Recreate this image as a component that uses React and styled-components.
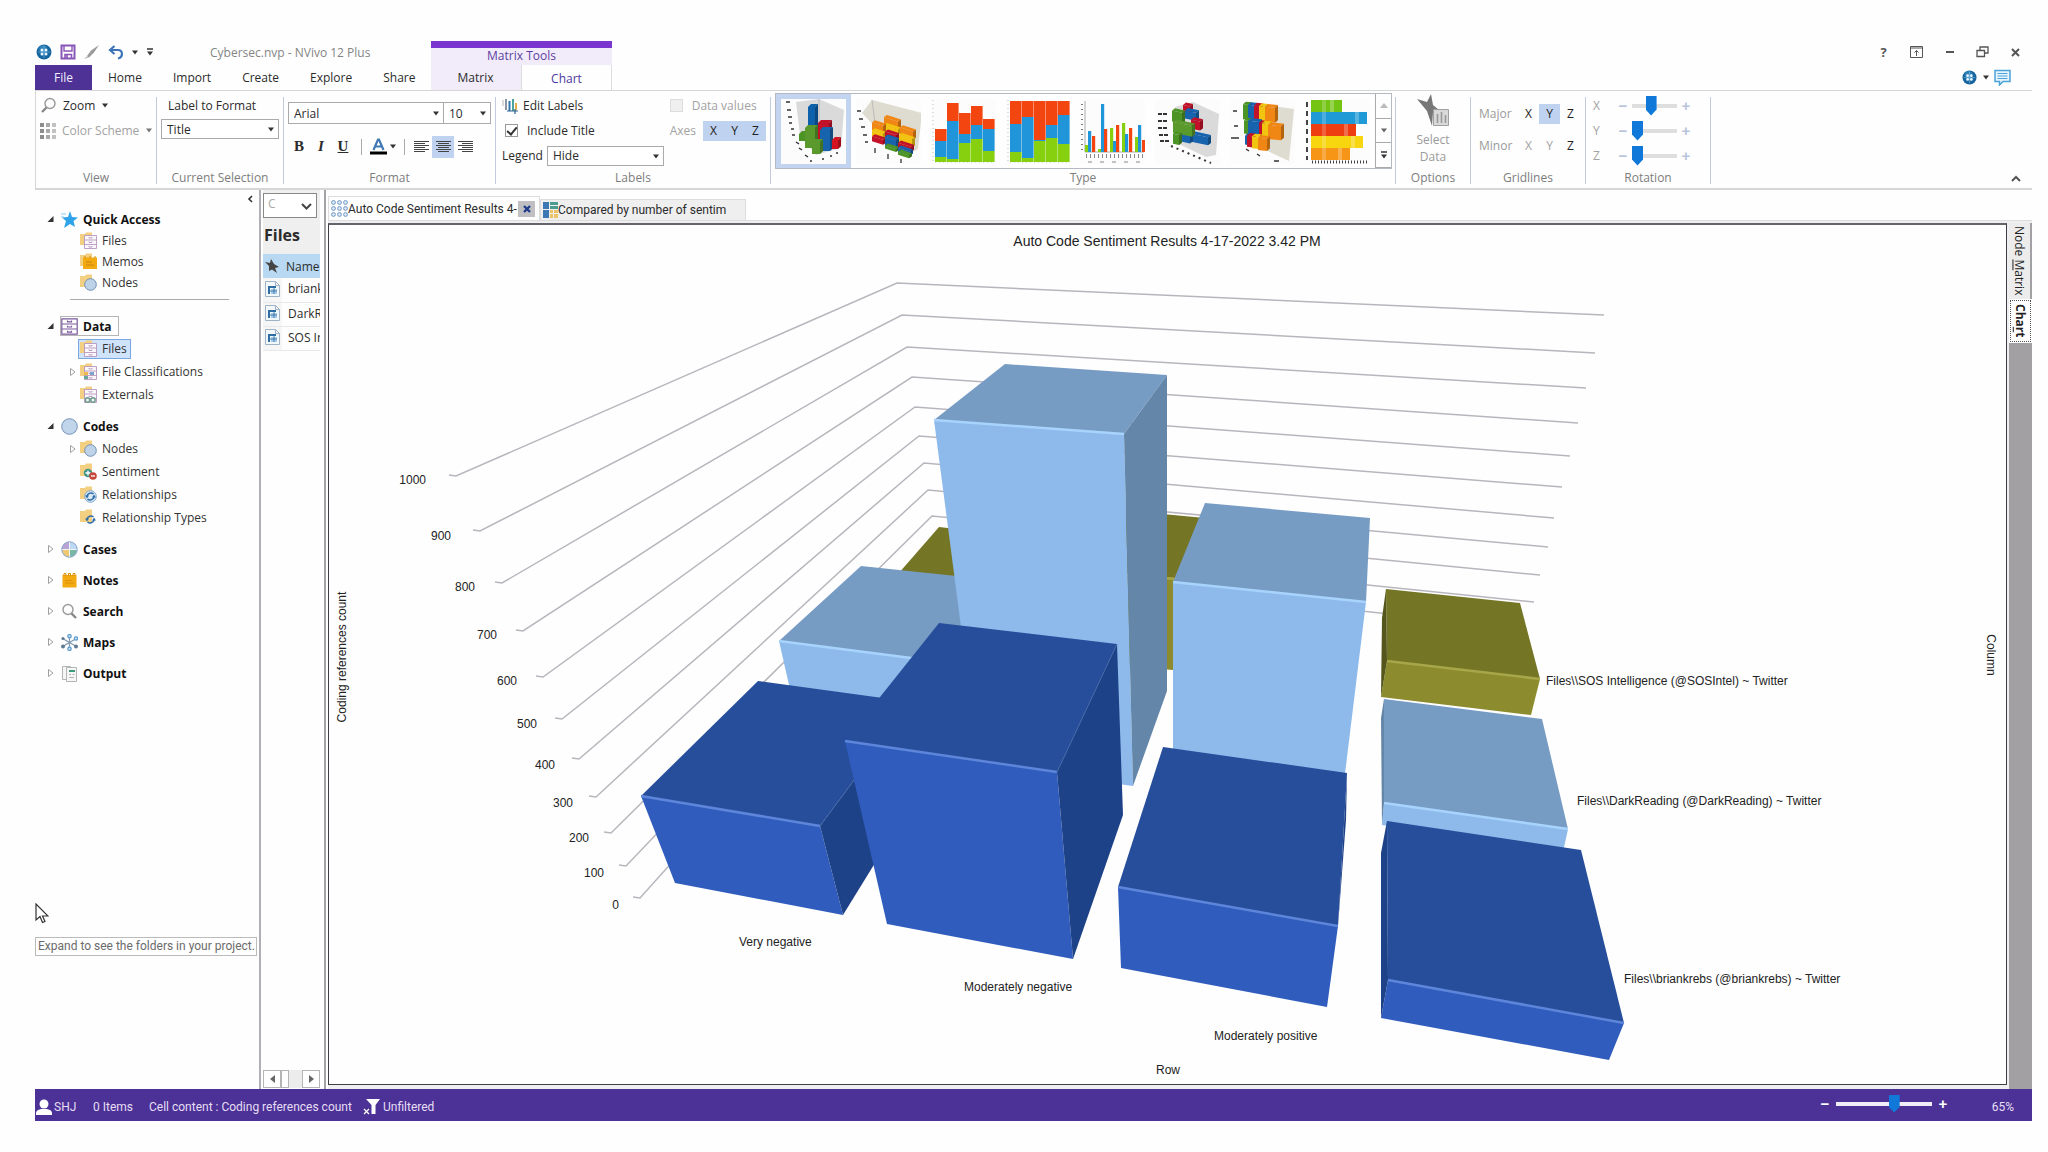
import React, { useState } from 'react'
import styled, { createGlobalStyle } from 'styled-components'

const ui = `'Open Sans', 'Noto Sans', sans-serif`
const narrow = `Roboto, 'Liberation Sans', sans-serif`
const arial = `'Liberation Sans', Arial, sans-serif`

const GlobalStyle = createGlobalStyle`
    * {
        box-sizing: border-box;
    }

    body {
        margin: 0;
        background: #fefefe;
        color: #2b2b2b;
        font-family: ${ui};
        font-size: 12px;
    }

    button, select, input {
        font: inherit;
        color: inherit;
        margin: 0;
    }

    svg {
        display: block;
        flex: none;
    }
`

/* ---------- icons ---------- */

const Caret = ({ color = '#333' }) => (
    <svg width="8" height="5" viewBox="0 0 8 5"><path d="M1 0.5h6L4 4.5z" fill={color} /></svg>
)

const GlobeIcon = ({ size = 16 }) => (
    <svg width={size} height={size} viewBox="0 0 16 16">
        <circle cx="8" cy="8" r="7.5" fill="#17659f" />
        <circle cx="7" cy="5" r="4" fill="#3d94c8" opacity=".6" />
        <g fill="#e9f6ff">
            <circle cx="6" cy="6" r="1.5" />
            <circle cx="10" cy="6" r="1.5" />
            <circle cx="6" cy="10" r="1.5" />
            <circle cx="10" cy="10" r="1.5" />
        </g>
        <path d="M2 8h12M8 2v12" stroke="#7fc0e6" strokeWidth=".6" />
    </svg>
)

const SaveIcon = () => (
    <svg width="16" height="16" viewBox="0 0 16 16" fill="none" stroke="#8a55b8" strokeWidth="2">
        <path d="M1.5 1.5h13v13h-13z" />
        <path d="M4 2v5h8V2" strokeWidth="1.4" />
        <path d="M5 14.5v-4h6.5v4" strokeWidth="1.6" />
        <path d="M7 11v3" strokeWidth="1.6" />
    </svg>
)

const PencilIcon = () => (
    <svg width="17" height="15" viewBox="0 0 17 15">
        <path d="M16 0L8 5.5 4 11l2 1.5 5-5z" fill="#9b9b9b" />
        <path d="M1 14l3-3 2 1.5z" fill="#bbb" />
    </svg>
)

const UndoIcon = () => (
    <svg width="16" height="15" viewBox="0 0 16 15" fill="none" stroke="#3d74b8" strokeWidth="2.2">
        <path d="M6.5 1L2 5l4.5 4" />
        <path d="M2.5 5H10c5 0 5.5 7 0 8.5" />
    </svg>
)

const MoreIcon = () => (
    <svg width="8" height="8" viewBox="0 0 8 8"><path d="M1 1h6" stroke="#333" strokeWidth="1.5" /><path d="M1 3.5h6L4 7.5z" fill="#333" /></svg>
)

const MagnifierIcon = ({ flip }) => (
    <svg width="17" height="17" viewBox="0 0 17 17" fill="none">
        <g transform={flip ? 'translate(17 0) scale(-1 1)' : undefined}>
            <circle cx="7" cy="6.5" r="5" stroke="#999" strokeWidth="1.4" />
            <path d="M10.5 10.5L15 15" stroke="#888" strokeWidth="2.4" />
        </g>
    </svg>
)

const SchemeIcon = () => (
    <svg width="16" height="16" viewBox="0 0 16 16">
        {[0, 1, 2].map(r => [0, 1, 2].map(c => (
            <rect key={`${r}${c}`} x={c * 6} y={r * 6} width="4" height="4" fill={['#8c8c8c', '#a8a8a8', '#c2c2c2'][c]} />
        )))}
    </svg>
)

const AlignIcon = ({ align }) => {
    const x = { left: 0, center: 2, right: 4 }[align]
    return (
        <svg width="15" height="13" viewBox="0 0 15 13" stroke="#444" strokeWidth="1">
            {[1, 3, 5, 7, 9, 11].map((y, i) => (
                <path key={y} d={i % 2 ? `M${x} ${y + 0.5}h11` : `M0 ${y + 0.5}h15`} />
            ))}
        </svg>
    )
}

const FontColorIcon = () => (
    <svg width="17" height="17" viewBox="0 0 17 17">
        <path d="M3.5 12L8 1.5h1L13.5 12M5.3 8.5h6.4" fill="none" stroke="#3f78b5" strokeWidth="2.2" />
        <path d="M0 13.5h17v3H0z" fill="#000" />
    </svg>
)

const EditLabelsIcon = () => (
    <svg width="17" height="16" viewBox="0 0 17 16" fill="none" strokeWidth="2">
        <path d="M1 2v6" stroke="#b5b5b5" strokeWidth="1" />
        <path d="M4 1v11" stroke="#8b97a5" />
        <path d="M7.5 3v10" stroke="#2d78b5" />
        <path d="M11 1v12" stroke="#4aa3a0" />
        <path d="M14 5v7" stroke="#e5b04a" />
        <path d="M5 13h11M13 11v5" stroke="#2d5f8a" strokeWidth="1.2" />
    </svg>
)

const SelectDataIcon = () => (
    <svg width="33" height="33" viewBox="0 0 33 33">
        <path d="M0 5l10 3L14 0l2 11 6 5-6 2-1 14-5-15z" fill="#777" />
        <path d="M16.5 15.5h15v16h-15z" fill="#d9d9d9" stroke="#a0a0a0" />
        <path d="M20.5 20v9M24.5 18v11M28.5 21v8" stroke="#999" strokeWidth="1.6" />
    </svg>
)

const RibbonToggleIcon = () => (
    <svg width="13" height="12" viewBox="0 0 13 12" fill="none" stroke="#555">
        <path d="M.5 .5h12v11H.5zM.5 2h12" />
        <path d="M6.5 10V4.5M4.5 6.5l2-2 2 2" />
    </svg>
)

const RestoreIcon = () => (
    <svg width="13" height="12" viewBox="0 0 13 12" fill="none" stroke="#555" strokeWidth="1.3">
        <path d="M4 4V1h8v6H9" />
        <path d="M1 4.5h7.5v6H1z" />
    </svg>
)

const ChatIcon = () => (
    <svg width="17" height="17" viewBox="0 0 17 17">
        <path d="M1 1.5h15v11H9L5.5 16v-3.5H1z" fill="#e8f4fc" stroke="#4ba3d8" strokeWidth="1.5" />
        <path d="M3.5 4.5h10M3.5 7h10M3.5 9.5h10" stroke="#4ba3d8" />
    </svg>
)

const StarIcon = () => (
    <svg width="17" height="17" viewBox="0 0 17 17">
        <path d="M9 0l2 6 6 .5-4.5 3.5L14 16l-5-3-6 4 2-7-4-3.5 6-.5z" fill="#2ea3ea" />
        <path d="M0 3h5M0 6h3" stroke="#8ccdf2" />
    </svg>
)

const CabinetIcon = () => (
    <svg width="17" height="17" viewBox="0 0 17 17" fill="none" stroke="#7a5a9c" strokeWidth="1.2">
        <path d="M.8 .8h15.4v15.4H.8zM.8 6h15.4M.8 11h15.4" />
        <path d="M6.5 2.5v1.3h4V2.5M6.5 7.7V9h4V7.7M6.5 12.8v1.3h4v-1.3" />
    </svg>
)

const CircleIcon = () => (
    <svg width="17" height="17" viewBox="0 0 17 17"><circle cx="8.5" cy="8.5" r="7.8" fill="#c1d5ea" stroke="#7190b5" /></svg>
)

const CasesIcon = () => (
    <svg width="17" height="17" viewBox="0 0 17 17">
        <path d="M8.5 8.5V1A7.5 7.5 0 0 0 1 8.5z" fill="#b9a3d6" />
        <path d="M8.5 8.5V1A7.5 7.5 0 0 1 16 8.5z" fill="#bcd8f2" />
        <path d="M8.5 8.5V16A7.5 7.5 0 0 1 1 8.5z" fill="#eec970" />
        <path d="M8.5 8.5V16A7.5 7.5 0 0 0 16 8.5z" fill="#78b8a4" />
        <path d="M8.5 1v15M1 8.5h15" stroke="#f4f7fa" />
        <circle cx="8.5" cy="8.5" r="7.7" fill="none" stroke="#7e9cc4" />
    </svg>
)

const NotesIcon = () => (
    <svg width="17" height="17" viewBox="0 0 17 17">
        <path d="M1.5 3h14v12.5h-14z" fill="#f3a910" />
        <path d="M3 4V1.5h2V4M7.5 4V1.5h2V4M12 4V1.5h2V4" fill="none" stroke="#d98f08" />
        <path d="M4 8.5h7M4 11h9" stroke="#d08c10" strokeWidth=".8" />
    </svg>
)

const MapsIcon = () => (
    <svg width="17" height="17" viewBox="0 0 17 17" stroke="#7e97ad" strokeWidth="1.2">
        <path d="M8.5 3v11M2.5 5l12 7M14.5 5l-12 7" />
        <circle cx="8.5" cy="2.2" r="1.7" fill="#c4e0f5" stroke="#5b9bd0" />
        <circle cx="8.5" cy="14.8" r="1.7" fill="#c4e0f5" stroke="#5b9bd0" />
        <circle cx="15" cy="4.5" r="1.7" fill="#c4e0f5" stroke="#5b9bd0" />
        <circle cx="2" cy="4.5" r="1.6" fill="#5f7a92" stroke="none" />
        <circle cx="2" cy="12.5" r="2" fill="#5f7a92" stroke="none" />
        <circle cx="15" cy="12.5" r="2" fill="#5f7a92" stroke="none" />
        <circle cx="8.5" cy="8.5" r="1.5" fill="#8ba2b6" stroke="none" />
    </svg>
)

const OutputIcon = () => (
    <svg width="17" height="17" viewBox="0 0 17 17" fill="#f6f6f6" stroke="#b4b4b4">
        <path d="M1.5 1.5h8v13h-8z" />
        <path d="M5.5 2.5h10v14h-10z" />
        <path d="M8 6h6" stroke="#3d9b7a" strokeWidth="2" />
        <path d="M8 9.5h2M11.5 9.5h2M8 12.5h5" />
    </svg>
)

const FolderIcon = ({ kind }) => (
    <svg width="17" height="17" viewBox="0 0 17 17">
        <path d="M0 2h5l1-1.5h6V13H0z" fill="#f3cf82" />
        {(kind === 'files' || kind === 'class' || kind === 'ext') && (
            <g fill="#fbf8fc" stroke="#b796bd" strokeWidth=".9">
                <path d="M4.5 3.5h12v13h-12zM4.5 8h12M4.5 12.5h12" />
                <path d="M9 5v1h3V5M9 9.5v1h3v-1M9 14v1h3v-1" />
            </g>
        )}
        {kind === 'class' && <g><path d="M4 9h4v3H4z" fill="#edb74a" /><path d="M4 13h4v3H4z" fill="#69a796" /><path d="M10 9h4v3h-4z" fill="#7ca3c9" /></g>}
        {kind === 'ext' && <g fill="#eef5f2" stroke="#6c9a8c" strokeWidth="1.4"><circle cx="7.5" cy="14" r="2.2" /><circle cx="13" cy="14" r="2.2" /></g>}
        {kind === 'memos' && <g><path d="M3 4.5h14V16H3z" fill="#f3a910" /><path d="M5 5V3M10 5V3M15 5V3" stroke="#cf8a0b" /><path d="M6 9h6M6 12h8" stroke="#bd7c10" strokeWidth=".8" /></g>}
        {kind === 'nodes' && <circle cx="10.5" cy="10.5" r="5.8" fill="#bed3e8" stroke="#7190b5" />}
        {kind === 'sentiment' && (
            <g>
                <circle cx="8" cy="10" r="4.2" fill="#3f9488" />
                <path d="M8 7.5v5M5.5 10h5" stroke="#fff" strokeWidth="1.3" />
                <circle cx="13" cy="13" r="3.8" fill="#c8473d" />
                <path d="M11 13h4" stroke="#fff" strokeWidth="1.3" />
            </g>
        )}
        {(kind === 'rel' || kind === 'reltype') && (
            <g fill="none">
                {kind === 'rel' && <circle cx="10.5" cy="10.5" r="5.8" fill="#dbe9f7" stroke="#7ea5d2" />}
                <path d="M7 10a4 4 0 0 1 6.5-2M14 11a4 4 0 0 1-6.5 2" stroke="#2f6ea8" strokeWidth="1.6" />
                <path d="M5 9.5h4l-2 3zM16 11.5h-4l2-3z" fill="#2f6ea8" />
            </g>
        )}
    </svg>
)

const Expander = ({ open }) => (
    <svg width="8" height="10" viewBox="0 0 8 10">
        {open
            ? <path d="M6.5 2v6H.5z" fill="#333" />
            : <path d="M1.5 1.5L6 5 1.5 8.5z" fill="#fff" stroke="#a0a0a0" />}
    </svg>
)

const SheetIcon = () => (
    <svg width="15" height="16" viewBox="0 0 15 16">
        <path d="M.5 .5h10l4 4v11H.5z" fill="#f2f7fb" stroke="#9fb3c4" />
        <path d="M10.5 .5v4h4" fill="none" stroke="#9fb3c4" />
        <path d="M6 8h6v5H6z" fill="#a9cbe6" />
        <path d="M3 5h8v2H3zM3 5h2v8H3z" fill="#2d6da3" />
        <path d="M3 10h9M9 7v6" stroke="#2d6da3" strokeWidth=".8" />
    </svg>
)

const PinIcon = () => (
    <svg width="14" height="14" viewBox="0 0 14 14"><path d="M0 3l5 1 1-4 3 5 5 3-4 1 2 5-5-3.5L4 12V7z" fill="#444" /></svg>
)

const DotsIcon = () => (
    <svg width="17" height="17" viewBox="0 0 17 17" fill="#dceaf7" stroke="#6f97c4">
        {[2.5, 8.5, 14.5].map(y => [2.5, 8.5, 14.5].map(x => <circle key={`${x}-${y}`} cx={x} cy={y} r="1.9" />))}
    </svg>
)

const TreemapIcon = () => (
    <svg width="15" height="16" viewBox="0 0 15 16">
        <path d="M0 0h6v7H0zM0 8h6v8H0z" fill="#3d78b5" />
        <path d="M7 0h8v3H7zM7 4h8v3H7z" fill="#4b9d90" />
        <path d="M7 8h3v3H7zM11 8h4v3h-4zM7 12h3v4H7zM11 12h4v4h-4z" fill="#ecc467" />
    </svg>
)

const UserIcon = () => (
    <svg width="16" height="16" viewBox="0 0 16 16" fill="#fff"><circle cx="8" cy="5" r="4.5" /><path d="M0 16v-2q0-3 5-4h6q5 1 5 4v2z" /></svg>
)

const FilterIcon = () => (
    <svg width="18" height="16" viewBox="0 0 18 16">
        <path d="M3 0h14l-4.5 6v9h-4V6z" fill="#fff" />
        <path d="M1 10l5 5M6 10l-5 5" stroke="#fff" strokeWidth="1.2" />
    </svg>
)

const MouseCursor = styled(({ className }) => (
    <svg className={className} width="14" height="21" viewBox="0 0 14 21">
        <path d="M1 1v16l4-3.5 2.5 6 2.5-1L7.5 13H13z" fill="#fff" stroke="#333" strokeWidth="1.2" />
    </svg>
))`
    position: absolute;
    left: 0;
    bottom: 165px;
`

/* ---------- chart type gallery ---------- */

const RED = '#f2450f'
const BLUE = '#2095da'
const GREEN = '#86d00f'

const StackedThumb = ({ bars }) => (
    <>
        <path d="M2 1v62h62" fill="none" stroke="#999" strokeWidth=".6" strokeDasharray="1 3" />
        {bars.map(([r, b, g], i) => (
            <g key={i}>
                <rect x={4 + i * 12} y={r} width="11.6" height={b - r} fill={RED} />
                <rect x={4 + i * 12} y={b} width="11.6" height={g - b} fill={BLUE} />
                <rect x={4 + i * 12} y={g} width="11.6" height={63 - g} fill={GREEN} />
            </g>
        ))}
    </>
)

const clustered = [
    [5, 46, GREEN], [8, 32, BLUE], [12, 37, RED],
    [18, 50, GREEN], [21, 5, BLUE], [24, 30, RED],
    [30, 29, GREEN], [33, 42, BLUE], [36, 26, RED],
    [42, 24, GREEN], [45, 35, BLUE], [49, 29, RED],
    [55, 38, GREEN], [58, 26, BLUE], [62, 41, RED],
]

const Box3d = ({ x, y, w, h, c }) => (
    <g>
        <path d={`M${x} ${y}l3-3h${w}l-3 3z`} fill={c} />
        <path d={`M${x + w} ${y}l3-3v${h}l-3 3z`} fill={c} />
        <path d={`M${x + w} ${y}l3-3v${h}l-3 3z`} fill="#000" opacity=".25" />
        <rect x={x} y={y} width={w} height={h} fill={c} />
    </g>
)

const thumbs = [
    {
        name: '3D column',
        art: (
            <>
                <path d="M15 3l23-3 25 11-3 38-25 7L19 36z" fill="#dadada" />
                <path d="M38 0v38" stroke="#bbb" />
                <Box3d x={37} y={24} w={11} h={22} c="#c2122a" />
                <Box3d x={27} y={8} w={7} h={30} c="#0d61ab" />
                <Box3d x={18} y={35} w={7} h={7} c="#4d9427" />
                <Box3d x={39} y={31} w={10} h={21} c="#1763ad" />
                <Box3d x={51} y={41} w={6} h={9} c="#d31320" />
                <Box3d x={24} y={29} w={10} h={20} c="#5a9a2c" />
                <Box3d x={31} y={43} w={8} h={12} c="#5a9a2c" />
                <path d="M5 3h4M6 11h4M7 18h4M8 24h3M10 30h3M11 36h3M15 43l3 2M18 49l3 2M24 56l3 2M29 62h2M41 60h2M49 57h2M55 54h2" stroke="#333" strokeWidth="1.5" />
            </>
        ),
    },
    {
        name: '3D stacked column',
        art: (
            <>
                <path d="M6 14L16 1l50 13-4 36-14 8z" fill="#dedbd0" />
                <path d="M16 1l4 30" stroke="#bbb" />
                <g transform="skewY(18)">
                    <Box3d x={28} y={9} w={14} h={8} c="#f08614" />
                    <Box3d x={28} y={17} w={14} h={5} c="#f2c40f" />
                    <Box3d x={16} y={18} w={11} h={8} c="#f08614" />
                    <Box3d x={16} y={26} w={11} h={6} c="#f2c40f" />
                    <Box3d x={16} y={32} w={11} h={5} c="#c2122a" />
                    <Box3d x={29} y={23} w={11} h={5} c="#c2122a" />
                    <Box3d x={29} y={28} w={11} h={9} c="#1763ad" />
                    <Box3d x={29} y={37} w={11} h={3} c="#4d9427" />
                    <Box3d x={44} y={14} w={13} h={8} c="#f08614" />
                    <Box3d x={43} y={22} w={13} h={8} c="#f2c40f" />
                    <Box3d x={42} y={30} w={13} h={5} c="#c2122a" />
                    <Box3d x={42} y={35} w={12} h={4} c="#1763ad" />
                    <Box3d x={42} y={39} w={11} h={3} c="#4d9427" />
                </g>
                <path d="M1 12h4M3 20h4M5 28h4M7 36h4M9 43h3M19 49v5M32 55v5M45 60v4" stroke="#333" strokeWidth="1.3" />
            </>
        ),
    },
    { name: 'Stacked column', art: <StackedThumb bars={[[30, 42, 58], [4, 22, 60], [14, 35, 44], [7, 26, 40], [20, 30, 52]]} /> },
    { name: '100% stacked column', art: <StackedThumb bars={[[2, 25, 53], [2, 18, 59], [2, 41, 42], [2, 26, 39], [2, 16, 45]]} /> },
    {
        name: 'Clustered column',
        art: (
            <>
                <path d="M5 2v51h59" fill="none" stroke="#888" strokeWidth=".7" />
                <path d="M2 5v49" stroke="#777" strokeWidth="2" strokeDasharray="1 4" />
                {clustered.map(([x, y, c]) => <rect key={x} x={x} y={y} width="3.2" height={53 - y} fill={c} />)}
                <path d="M6 57h58" stroke="#888" strokeWidth="4" strokeDasharray="1 3" />
                <path d="M8 63h56" stroke="#888" strokeDasharray="4 8" />
            </>
        ),
    },
    {
        name: '3D bar',
        art: (
            <>
                <path d="M20 8L38 3l26 12-3 41-10 2-29-14z" fill="#dadada" />
                <g transform="skewY(12)">
                    <Box3d x={28} y={0} w={7} h={8} c="#c2122a" />
                    <Box3d x={30} y={5} w={11} h={8} c="#1763ad" />
                    <Box3d x={36} y={13} w={9} h={9} c="#c2122a" />
                    <Box3d x={17} y={8} w={10} h={11} c="#4d9427" />
                    <Box3d x={35} y={27} w={18} h={8} c="#1763ad" />
                    <Box3d x={25} y={27} w={10} h={10} c="#1763ad" />
                    <Box3d x={18} y={19} w={19} h={11} c="#5a9a2c" />
                    <Box3d x={18} y={31} w={6} h={10} c="#4d9427" />
                </g>
                <path d="M3 15h9M3 22h10M3 29h10M4 36h9M5 42h10" stroke="#333" strokeWidth="2" strokeDasharray="4 1" />
                <path d="M16 47l40 17" stroke="#333" strokeWidth="2" strokeDasharray="2 4" />
            </>
        ),
    },
    {
        name: '3D stacked bar',
        art: (
            <>
                <path d="M14 3l50 7-5 52L16 42z" fill="#dedbd0" />
                <g transform="skewY(6)">
                    <Box3d x={13} y={4} w={6} h={15} c="#4d9427" />
                    <Box3d x={18} y={4} w={7} h={15} c="#1763ad" />
                    <Box3d x={24} y={4} w={6} h={15} c="#c2122a" />
                    <Box3d x={29} y={4} w={6} h={15} c="#f2c40f" />
                    <Box3d x={35} y={4} w={10} h={15} c="#f08614" />
                    <Box3d x={14} y={20} w={5} h={13} c="#4d9427" />
                    <Box3d x={18} y={20} w={11} h={14} c="#1763ad" />
                    <Box3d x={29} y={21} w={3} h={13} c="#c2122a" />
                    <Box3d x={32} y={21} w={7} h={13} c="#f2c40f" />
                    <Box3d x={38} y={22} w={13} h={14} c="#f08614" />
                    <Box3d x={15} y={35} w={3} h={9} c="#1763ad" />
                    <Box3d x={17} y={35} w={6} h={11} c="#c2122a" />
                    <Box3d x={22} y={35} w={7} h={12} c="#f2c40f" />
                    <Box3d x={28} y={36} w={9} h={12} c="#f08614" />
                </g>
                <path d="M3 12h4M4 27h4M1 39h8M16 50l3 2M27 55l3 2M44 62h5" stroke="#333" strokeWidth="1.4" />
            </>
        ),
    },
    {
        name: 'Stacked bar',
        art: (
            <>
                {[['#74c414', 37], ['#1f9ad6', 62], ['#ee3d10', 51], ['#f7d50f', 58], ['#f79616', 45]].map(([c, end], i) => (
                    <g key={c}>
                        <rect x="6" y={1 + i * 12} width={end - 6} height="12" fill={c} />
                        <rect x="17" y={1 + i * 12} width="4" height="12" fill="#fff" opacity=".2" />
                        <rect x={end - 12} y={1 + i * 12} width="4" height="12" fill="#fff" opacity=".25" />
                    </g>
                ))}
                <path d="M2 3v58" stroke="#444" strokeWidth="2" strokeDasharray="5 4" />
                <path d="M7 63h56" stroke="#444" strokeWidth="3" strokeDasharray="1 2" />
            </>
        ),
    },
]

/* ---------- chart ---------- */

const gridlines = [
    // value, label right/middle, left end, back corner, right end
    [1000, 426, 480, 456, 476, 897, 283, 1604, 315],
    [900, 451, 536, 480, 531, 902, 315, 1595, 353],
    [800, 475, 587, 502, 583, 907, 347, 1586, 388],
    [700, 497, 635, 523, 631, 912, 377, 1578, 423],
    [600, 517, 681, 543, 677, 915, 407, 1570, 456],
    [500, 537, 724, 562, 719, 919, 436, 1562, 487],
    [400, 555, 765, 579, 759, 924, 463, 1554, 518],
    [300, 573, 803, 596, 797, 928, 490, 1548, 547],
    [200, 589, 838, 611, 833, 932, 516, 1540, 575],
    [100, 604, 873, 626, 866, 936, 541, 1534, 602],
    [0, 619, 905, 640, 898, 939, 565, 1527, 629],
]

const palette = {
    olive: { top: '#757526', front: '#8c8c2f', side: '#55561b', edge: '#a7a74a' },
    light: { top: '#779cc4', front: '#8dbaeb', side: '#6486a9', edge: '#a8d3fd' },
    dark: { top: '#274e9b', front: '#305dbd', side: '#1e4287', edge: '#5d86da' },
}

const bars = [
    { tone: 'olive', top: '939,527 1010,535 1000,600 878,597' },
    { tone: 'olive', top: '1120,510 1205,518 1190,582 1100,573', front: '1100,573 1190,580 1185,671 1100,664', edge: '1100,573 1190,580' },
    { tone: 'olive', top: '1386,589 1520,603 1540,679 1387,661', front: '1387,661 1540,679 1531,715 1381,697', side: '1386,589 1382,618 1381,697 1387,661', edge: '1387,661 1540,679' },
    { tone: 'light', top: '861,566 985,579 950,663 779,641', front: '779,641 950,663 940,745 797,720', edge: '779,641 950,663' },
    { tone: 'light', top: '1005,364 1167,375 1124,434 934,420', front: '934,420 1124,434 1133,786 979,765', side: '1124,434 1167,375 1167,691 1133,786', edge: '934,420 1124,434' },
    { tone: 'light', top: '1205,503 1370,518 1366,602 1173,582', front: '1173,582 1366,602 1343,790 1173,760', edge: '1173,582 1366,602' },
    { tone: 'light', top: '1384,699 1542,719 1568,829 1384,803', front: '1384,803 1568,829 1563,852 1382,825', side: '1384,699 1381,718 1382,825 1384,803', edge: '1384,803 1568,829' },
    { tone: 'dark', top: '758,681 912,702 820,826 641,796', front: '641,796 820,826 843,915 675,883', side: '820,826 912,702 920,790 843,915', edge: '641,796 820,826', sideEdge: '820,826 912,702' },
    { tone: 'dark', top: '939,623 1117,644 1057,772 845,741', front: '845,741 1057,772 1073,959 887,924', side: '1057,772 1117,644 1123,815 1073,959', edge: '845,741 1057,772', sideEdge: '1057,772 1117,644' },
    { tone: 'dark', top: '1163,747 1347,773 1338,926 1118,887', front: '1118,887 1338,926 1327,1007 1121,968', side: '1347,773 1346,820 1338,926', edge: '1118,887 1338,926' },
    { tone: 'dark', top: '1387,821 1581,850 1624,1023 1388,980', front: '1388,980 1624,1023 1609,1060 1381,1018', side: '1387,821 1381,853 1381,1018 1388,980', edge: '1388,980 1624,1023' },
]

const chartLabels = [
    ['Very negative', 739, 946],
    ['Moderately negative', 964, 991],
    ['Moderately positive', 1214, 1040],
    ['Row', 1156, 1074],
    ['Files\\\\SOS Intelligence (@SOSIntel) ~ Twitter', 1546, 685],
    ['Files\\\\DarkReading (@DarkReading) ~ Twitter', 1577, 805],
    ['Files\\\\briankrebs (@briankrebs) ~ Twitter', 1624, 983],
]

const ChartSvg = styled.svg`
    width: 100%;
    height: auto;
    font-family: ${arial};
    font-size: 12px;
    fill: #222;
`

const SentimentChart = () => (
    <ChartSvg viewBox="330 225 1675 858" role="img" aria-label="Coding references count by row and column">
        <text x="1167" y="246" fontSize="14" textAnchor="middle">Auto Code Sentiment Results 4-17-2022 3.42 PM</text>
        {gridlines.map(([value, lx, ly, x1, y1, x2, y2, x3, y3]) => (
            <g key={value}>
                <polyline points={`${x1 - 7},${y1 - 1} ${x1},${y1} ${x2},${y2} ${x3},${y3}`} fill="none" stroke="#b9b5bd" strokeWidth="1.5" />
                <text x={lx} y={ly + 4} textAnchor="end">{value}</text>
            </g>
        ))}
        {bars.map(({ tone, top, front, side, edge, sideEdge }) => {
            const c = palette[tone]
            return (
                <g key={top}>
                    <polygon points={top} fill={c.top} />
                    {front && <polygon points={front} fill={c.front} />}
                    {side && <polygon points={side} fill={c.side} />}
                    {edge && <polyline points={edge} stroke={c.edge} strokeWidth="2.5" />}
                    {sideEdge && <polyline points={sideEdge} stroke="#4768a8" strokeWidth="1" />}
                </g>
            )
        })}
        {chartLabels.map(([text, x, y]) => <text key={text} x={x} y={y}>{text}</text>)}
        <text transform="translate(346 657) rotate(-90)" textAnchor="middle">Coding references count</text>
        <text transform="translate(1987 655) rotate(90)" textAnchor="middle">Column</text>
    </ChartSvg>
)

/* ---------- page ---------- */

const App = () => {
    const [rotation, setRotation] = useState({ X: 40, Y: 0, Z: 0 })
    const [zoom, setZoom] = useState(62)

    return (
        <>
            <GlobalStyle />
            <Window>
                <Header>
                    <HeaderLeft>
                        <TitleRow>
                            <IconButton aria-label="NVivo"><GlobeIcon /></IconButton>
                            <IconButton aria-label="Save"><SaveIcon /></IconButton>
                            <IconButton aria-label="Edit"><PencilIcon /></IconButton>
                            <IconButton aria-label="Undo"><UndoIcon /></IconButton>
                            <SmallButton aria-label="Undo list"><Caret /></SmallButton>
                            <SmallButton aria-label="Customize"><MoreIcon /></SmallButton>
                            <Title>Cybersec.nvp - NVivo 12 Plus</Title>
                        </TitleRow>
                        <Tabs>
                            <FileTab>File</FileTab>
                            {['Home', 'Import', 'Create', 'Explore', 'Share'].map(t => <Tab key={t}>{t}</Tab>)}
                        </Tabs>
                    </HeaderLeft>
                    <Context>
                        <ContextTitle>Matrix Tools</ContextTitle>
                        <Tabs>
                            <ContextTab>Matrix</ContextTab>
                            <ContextTab $active>Chart</ContextTab>
                        </Tabs>
                    </Context>
                    <HeaderRight>
                        <WindowButtons>
                            <WindowButton aria-label="Help">?</WindowButton>
                            <WindowButton aria-label="Ribbon options"><RibbonToggleIcon /></WindowButton>
                            <WindowButton aria-label="Minimize"><svg width="8" height="2"><path d="M0 0h8v2H0z" fill="#555" /></svg></WindowButton>
                            <WindowButton aria-label="Restore"><RestoreIcon /></WindowButton>
                            <WindowButton aria-label="Close"><svg width="9" height="9"><path d="M1 1l7 7M8 1L1 8" stroke="#555" strokeWidth="2" /></svg></WindowButton>
                        </WindowButtons>
                        <AccountRow>
                            <IconButton aria-label="Account"><GlobeIcon size={15} /></IconButton>
                            <SmallButton aria-label="Account menu"><Caret /></SmallButton>
                            <IconButton aria-label="Feedback"><ChatIcon /></IconButton>
                        </AccountRow>
                    </HeaderRight>
                </Header>

                <Ribbon>
                    <Group $width={121}>
                        <GroupBody>
                            <ToolButton><MagnifierIcon flip />Zoom<Caret /></ToolButton>
                            <ToolButton $disabled><SchemeIcon />Color Scheme<Caret color="#777" /></ToolButton>
                        </GroupBody>
                        <GroupName>View</GroupName>
                    </Group>
                    <Group $width={127}>
                        <GroupBody>
                            <FieldLabel htmlFor="label-to-format">Label to Format</FieldLabel>
                            <SelectBox>
                                <Select id="label-to-format"><option>Title</option></Select>
                                <Caret />
                            </SelectBox>
                        </GroupBody>
                        <GroupName>Current Selection</GroupName>
                    </Group>
                    <Group $width={212}>
                        <GroupBody>
                            <FontRow>
                                <SelectBox $grow $tall>
                                    <Select aria-label="Font"><option>Arial</option></Select>
                                    <Caret />
                                </SelectBox>
                                <SelectBox $width={48} $tall $joined>
                                    <Select aria-label="Font size"><option>10</option></Select>
                                    <Caret />
                                </SelectBox>
                            </FontRow>
                            <FormatRow>
                                <FormatButton aria-label="Bold">B</FormatButton>
                                <FormatButton aria-label="Italic"><i>I</i></FormatButton>
                                <FormatButton aria-label="Underline"><u>U</u></FormatButton>
                                <Rule />
                                <FormatButton aria-label="Font color"><FontColorIcon /></FormatButton>
                                <SmallButton aria-label="Font color menu"><Caret /></SmallButton>
                                <Rule />
                                <FormatButton aria-label="Align left"><AlignIcon align="left" /></FormatButton>
                                <FormatButton aria-label="Center" $on><AlignIcon align="center" /></FormatButton>
                                <FormatButton aria-label="Align right"><AlignIcon align="right" /></FormatButton>
                            </FormatRow>
                        </GroupBody>
                        <GroupName>Format</GroupName>
                    </Group>
                    <Group $width={275}>
                        <LabelsGrid>
                            <div>
                                <ToolButton $close><EditLabelsIcon />Edit Labels</ToolButton>
                                <CheckLabel><Check type="checkbox" defaultChecked />Include Title</CheckLabel>
                                <LegendRow>
                                    <label htmlFor="legend">Legend</label>
                                    <SelectBox $width={117}>
                                        <Select id="legend"><option>Hide</option></Select>
                                        <Caret />
                                    </SelectBox>
                                </LegendRow>
                            </div>
                            <div>
                                <CheckLabel $disabled><Check type="checkbox" disabled />Data values</CheckLabel>
                                <AxesRow>
                                    Axes
                                    <AxisSet>
                                        {['X', 'Y', 'Z'].map(a => <AxisButton key={a} $on aria-label={`Axis ${a}`}>{a}</AxisButton>)}
                                    </AxisSet>
                                </AxesRow>
                            </div>
                        </LabelsGrid>
                        <GroupName>Labels</GroupName>
                    </Group>
                    <Group $width={625}>
                        <Gallery>
                            {thumbs.map(({ name, art }, i) => (
                                <GalleryItem key={name} aria-label={name} $selected={i === 0}>
                                    <svg width="65" height="65" viewBox="0 0 65 65">
                                        <rect width="65" height="65" fill="#fcfcfc" />
                                        {art}
                                    </svg>
                                </GalleryItem>
                            ))}
                            <GalleryScroll>
                                <button aria-label="Previous types"><svg width="8" height="5"><path d="M4 0l4 5H0z" fill="#bbb" /></svg></button>
                                <button aria-label="Next types"><Caret color="#666" /></button>
                                <button aria-label="All types"><MoreIcon /></button>
                            </GalleryScroll>
                        </Gallery>
                        <GroupName>Type</GroupName>
                    </Group>
                    <Group $width={75}>
                        <SelectData disabled>
                            <SelectDataIcon />
                            Select<br />Data
                        </SelectData>
                        <GroupName>Options</GroupName>
                    </Group>
                    <Group $width={115}>
                        <GridlineRows>
                            <GridlineRow>
                                <span>Major</span>
                                <AxisButton aria-label="Major X">X</AxisButton>
                                <AxisButton aria-label="Major Y" $on>Y</AxisButton>
                                <AxisButton aria-label="Major Z">Z</AxisButton>
                            </GridlineRow>
                            <GridlineRow>
                                <span>Minor</span>
                                <AxisButton aria-label="Minor X" $dim>X</AxisButton>
                                <AxisButton aria-label="Minor Y" $dim>Y</AxisButton>
                                <AxisButton aria-label="Minor Z">Z</AxisButton>
                            </GridlineRow>
                        </GridlineRows>
                        <GroupName>Gridlines</GroupName>
                    </Group>
                    <Group $width={125}>
                        <GroupBody>
                            {['X', 'Y', 'Z'].map(axis => (
                                <RotationRow key={axis}>
                                    <label htmlFor={`rotate-${axis}`}>{axis}</label>
                                    <StepButton aria-label={`Decrease ${axis}`}>−</StepButton>
                                    <Slider
                                        id={`rotate-${axis}`}
                                        type="range"
                                        value={rotation[axis]}
                                        onChange={e => setRotation({ ...rotation, [axis]: Number(e.target.value) })}
                                    />
                                    <StepButton aria-label={`Increase ${axis}`}>+</StepButton>
                                </RotationRow>
                            ))}
                        </GroupBody>
                        <GroupName>Rotation</GroupName>
                    </Group>
                    <Collapse aria-label="Collapse ribbon"><svg width="10" height="7"><path d="M1 6l4-4 4 4" fill="none" stroke="#555" strokeWidth="2" /></svg></Collapse>
                </Ribbon>

                <Workspace>
                    <Sidebar>
                        <HideButton aria-label="Collapse navigation"><svg width="6" height="8"><path d="M5 1L2 4l3 3" fill="none" stroke="#333" strokeWidth="1.6" /></svg></HideButton>
                        <Section $first>
                            <SectionHead><Expander open /><SectionLink href="#quick"><StarIcon />Quick Access</SectionLink></SectionHead>
                            <Item $compact><ItemLink href="#qfiles"><FolderIcon kind="files" />Files</ItemLink></Item>
                            <Item $compact><ItemLink href="#memos"><FolderIcon kind="memos" />Memos</ItemLink></Item>
                            <Item $compact><ItemLink href="#qnodes"><FolderIcon kind="nodes" />Nodes</ItemLink></Item>
                        </Section>
                        <Divider />
                        <Section>
                            <SectionHead><Expander open /><SectionLink href="#data" $boxed><CabinetIcon />Data</SectionLink></SectionHead>
                            <Item><ItemLink href="#files" $selected><FolderIcon kind="files" />Files</ItemLink></Item>
                            <Item $expandable><Expander /><ItemLink href="#class"><FolderIcon kind="class" />File Classifications</ItemLink></Item>
                            <Item><ItemLink href="#ext"><FolderIcon kind="ext" />Externals</ItemLink></Item>
                        </Section>
                        <Section>
                            <SectionHead><Expander open /><SectionLink href="#codes"><CircleIcon />Codes</SectionLink></SectionHead>
                            <Item $expandable><Expander /><ItemLink href="#nodes"><FolderIcon kind="nodes" />Nodes</ItemLink></Item>
                            <Item><ItemLink href="#sentiment"><FolderIcon kind="sentiment" />Sentiment</ItemLink></Item>
                            <Item><ItemLink href="#rel"><FolderIcon kind="rel" />Relationships</ItemLink></Item>
                            <Item><ItemLink href="#reltypes"><FolderIcon kind="reltype" />Relationship Types</ItemLink></Item>
                        </Section>
                        {[
                            ['Cases', <CasesIcon />],
                            ['Notes', <NotesIcon />],
                            ['Search', <MagnifierIcon />],
                            ['Maps', <MapsIcon />],
                            ['Output', <OutputIcon />],
                        ].map(([name, icon]) => (
                            <Section key={name}>
                                <SectionHead><Expander /><SectionLink href={`#${name}`}>{icon}{name}</SectionLink></SectionHead>
                            </Section>
                        ))}
                        <MouseCursor />
                        <Tooltip role="tooltip">Expand to see the folders in your project.</Tooltip>
                    </Sidebar>

                    <ListPane>
                        <ListTop>
                            <SearchBox>
                                <input aria-label="Search project" defaultValue="C" />
                                <svg width="11" height="7"><path d="M1 1l4.500 4.500L10 1" fill="none" stroke="#444" strokeWidth="2" /></svg>
                            </SearchBox>
                            <ListTitle>Files</ListTitle>
                        </ListTop>
                        <FileTable>
                            <thead>
                                <tr><th><PinIcon /></th><th>Name</th></tr>
                            </thead>
                            <tbody>
                                {['briankrebs', 'DarkReading', 'SOS Intelligence'].map(f => (
                                    <tr key={f}><td><SheetIcon /></td><td>{f}</td></tr>
                                ))}
                            </tbody>
                        </FileTable>
                        <ScrollBar>
                            <ScrollArrow aria-label="Scroll left"><svg width="5" height="8"><path d="M5 0v8L0 4z" fill="#666" /></svg></ScrollArrow>
                            <ScrollThumb />
                            <ScrollArrow aria-label="Scroll right"><svg width="5" height="8"><path d="M0 0v8l5-4z" fill="#666" /></svg></ScrollArrow>
                        </ScrollBar>
                    </ListPane>

                    <Detail>
                        <DocTabs>
                            <DocTab $active>
                                <DotsIcon />
                                <span>Auto Code Sentiment Results 4-</span>
                                <CloseTab aria-label="Close tab"><svg width="8" height="8"><path d="M1 1l6 6M7 1L1 7" stroke="#1f3c8c" strokeWidth="2.4" /></svg></CloseTab>
                            </DocTab>
                            <DocTab><TreemapIcon /><span>Compared by number of sentim</span></DocTab>
                        </DocTabs>
                        <DetailBody>
                            <ChartFrame><SentimentChart /></ChartFrame>
                            <SideTabs>
                                <SideTab><span>Node <u>M</u>atrix</span></SideTab>
                                <SideTab $active><span>Cha<u>r</u>t</span></SideTab>
                            </SideTabs>
                        </DetailBody>
                    </Detail>
                </Workspace>

                <StatusBar>
                    <UserIcon />
                    <StatusText $width={39}>SHJ</StatusText>
                    <StatusText $width={56}>0 Items</StatusText>
                    <StatusText $width={216}>Cell content : Coding references count</StatusText>
                    <FilterIcon />
                    <StatusText>Unfiltered</StatusText>
                    <ZoomTools>
                        <StepButton $light aria-label="Zoom out">−</StepButton>
                        <Slider $light type="range" aria-label="Zoom" value={zoom} onChange={e => setZoom(Number(e.target.value))} />
                        <StepButton $light aria-label="Zoom in">+</StepButton>
                    </ZoomTools>
                    <ZoomValue>65%</ZoomValue>
                </StatusBar>
            </Window>
        </>
    )
}

export default App

const Window = styled.div`
    display: flex;
    flex-direction: column;
    min-height: 100vh;
    padding: 36px 16px 31px 35px;
`

const Header = styled.header`
    display: flex;
    align-items: flex-end;
    height: 54px;
`

const HeaderLeft = styled.div`
    width: 396px;
`

const TitleRow = styled.div`
    display: flex;
    align-items: center;
    height: 29px;
    padding-top: 3px;
    gap: 7px;
`

const plainButton = `
    display: flex;
    align-items: center;
    justify-content: center;
    flex: none;
    padding: 0;
    border: 0;
    background: none;
`

const IconButton = styled.button`
    ${plainButton}
    width: 17px;
    height: 20px;
`

const SmallButton = styled.button`
    ${plainButton}
    width: 8px;
    height: 20px;
`

const Title = styled.div`
    flex: 1;
    padding-left: 49px;
    color: #858585;
    white-space: nowrap;
`

const Tabs = styled.nav`
    display: flex;
    gap: 1px;
    height: 25px;
`

const Tab = styled.button`
    flex: none;
    padding: 0 15px;
    border: 0;
    background: none;
`

const FileTab = styled(Tab)`
    width: 57px;
    padding: 0;
    background: #4e3296;
    color: #f3eefc;
`

const Context = styled.div`
    width: 181px;
    border-top: 7px solid #7a35cf;
    background: #f2ecfa;
`

const ContextTitle = styled.div`
    height: 17px;
    line-height: 15px;
    color: #5c3fa0;
    text-align: center;
`

const ContextTab = styled(Tab)`
    flex: 1;
    padding: 0;
    ${({ $active }) => $active && `
        height: 26px;
        background: #fefefe;
        color: #4d36a0;
        border-right: 1px solid #ddd;
        border-left: 1px solid #ddd;
    `}
`

const HeaderRight = styled.div`
    flex: 1;
    display: flex;
    flex-direction: column;
    align-items: flex-end;
`

const WindowButtons = styled.div`
    display: flex;
    height: 29px;
    padding-top: 3px;
`

const WindowButton = styled.button`
    ${plainButton}
    width: 33px;
    color: #555;
    font-size: 13px;
    font-weight: 700;
`

const AccountRow = styled.div`
    display: flex;
    align-items: center;
    gap: 4px;
    height: 25px;
    padding-right: 21px;
`

const Ribbon = styled.section`
    display: flex;
    height: 100px;
    border: solid #d6d6d6;
    border-width: 1px 0 2px 1px;
    padding-top: 2px;
`

const Group = styled.div`
    display: flex;
    flex-direction: column;
    justify-content: space-between;
    flex: none;
    width: ${({ $width }) => $width}px;
    padding: 0 4px;
    border-right: 1px solid;
    border-image: linear-gradient(transparent 5px, #c3cbdf 5px, #c3cbdf 90px, transparent 90px) 1;
`

const GroupBody = styled.div`
    display: flex;
    flex-direction: column;
`

const GroupName = styled.div`
    height: 18px;
    line-height: 16px;
    color: #7d7d7d;
    text-align: center;
    white-space: nowrap;
`

const ToolButton = styled.button`
    ${plainButton}
    justify-content: flex-start;
    gap: ${({ $close }) => $close ? 4 : 6}px;
    height: 25px;
    color: ${({ $disabled }) => $disabled ? '#a2a2a2' : '#2b2b2b'};
    white-space: nowrap;
`

const FieldLabel = styled.label`
    height: 26px;
    line-height: 25px;
    padding-left: 7px;
`

const SelectBox = styled.div`
    position: relative;
    flex: ${({ $grow }) => $grow ? '1' : 'none'};
    width: ${({ $width }) => $width ? `${$width}px` : 'auto'};
    height: ${({ $tall }) => $tall ? 22 : 20}px;
    margin-left: ${({ $joined }) => $joined ? '-1px' : '0'};

    svg {
        position: absolute;
        right: 4px;
        top: calc(50% - 2px);
        pointer-events: none;
    }
`

const Select = styled.select`
    display: block;
    appearance: none;
    width: 100%;
    height: 100%;
    padding: 0 5px;
    border: 1px solid #aaa;
    border-radius: 0;
    background: #fff;
`

const FontRow = styled.div`
    display: flex;
    padding-top: 9px;
`

const FormatRow = styled.div`
    display: flex;
    align-items: center;
    height: 45px;
`

const FormatButton = styled.button`
    ${plainButton}
    width: 22px;
    height: 22px;
    background: ${({ $on }) => $on ? '#bfd2f0' : 'none'};
    font-family: 'Liberation Serif', serif;
    font-size: 15px;
    font-weight: 700;
`

const Rule = styled.span`
    width: 1px;
    height: 16px;
    margin: 0 5px 0 7px;
    background: #aaa;
`

const LabelsGrid = styled.div`
    display: flex;
    justify-content: space-between;
    padding-left: 2px;
`

const CheckLabel = styled.label`
    display: flex;
    align-items: center;
    gap: 9px;
    height: 25px;
    padding-left: ${({ $disabled }) => $disabled ? 0 : 3}px;
    color: ${({ $disabled }) => $disabled ? '#a2a2a2' : '#2b2b2b'};
    white-space: nowrap;
`

const Check = styled.input`
    appearance: none;
    position: relative;
    width: 13px;
    height: 13px;
    border: 1px solid ${({ disabled }) => disabled ? '#ddd' : '#999'};
    background: ${({ disabled }) => disabled ? '#f0eff0' : '#fff'};

    &:checked::after {
        content: '';
        position: absolute;
        left: 3px;
        top: 0;
        width: 4px;
        height: 8px;
        border: solid #333;
        border-width: 0 2px 2px 0;
        transform: rotate(40deg);
    }
`

const LegendRow = styled.div`
    display: flex;
    align-items: center;
    gap: 4px;
    height: 25px;
`

const AxesRow = styled.div`
    display: flex;
    align-items: center;
    justify-content: flex-end;
    gap: 7px;
    height: 25px;
    color: #a2a2a2;
`

const AxisSet = styled.div`
    display: flex;
`

const AxisButton = styled.button`
    ${plainButton}
    width: 21px;
    height: 20px;
    background: ${({ $on }) => $on ? '#bfd2f0' : 'none'};
    color: ${({ $dim }) => $dim ? '#a2a2a2' : '#222'};
`

const Gallery = styled.div`
    display: flex;
    height: 76px;
    border: 1px solid #b5b9c4;
    margin-right: -1px;
`

const GalleryItem = styled.button`
    ${plainButton}
    flex: 1;
    background: ${({ $selected }) => $selected ? '#c3d4f0' : 'none'};
`

const GalleryScroll = styled.div`
    display: grid;
    grid-template-rows: repeat(3, 1fr);
    width: 16px;

    button {
        ${plainButton}
        border: solid #aaa;
        border-width: 0 0 1px 1px;
    }
`

const SelectData = styled.button`
    border: 0;
    padding: 1px 0 0;
    background: none;
    color: #9b9b9b;
    line-height: 17px;

    svg {
        margin: 0 auto 4px;
    }
`

const GridlineRows = styled.div`
    display: flex;
    flex-direction: column;
    gap: 12px;
    padding-top: 11px;
`

const GridlineRow = styled.div`
    display: flex;
    color: #9b9b9b;
    line-height: 20px;

    span {
        width: 45px;
        padding-left: 4px;
    }
`

const RotationRow = styled.div`
    display: flex;
    align-items: center;
    height: 25px;
    padding-left: 3px;
    color: #a2a2a2;

    label {
        width: 21px;
    }
`

const StepButton = styled.button`
    ${plainButton}
    width: ${({ $light }) => $light ? 22 : 18}px;
    height: 18px;
    color: ${({ $light }) => $light ? '#fff' : '#b9c4dc'};
    font-family: ${arial};
    font-size: 15px;
    font-weight: 700;
`

const Slider = styled.input`
    appearance: none;
    width: ${({ $light }) => $light ? 96 : 45}px;
    height: 20px;
    background: linear-gradient(${({ $light }) => $light ? '#f1edf8, #f1edf8' : '#dedede, #dedede'}) center / 100% 4px no-repeat;

    &::-webkit-slider-thumb {
        appearance: none;
        width: 11px;
        height: ${({ $light }) => $light ? 18 : 20}px;
        background: #0f78d8;
        clip-path: polygon(0 0, 100% 0, 100% 70%, 50% 100%, 0 70%);
    }
`

const Collapse = styled.button`
    ${plainButton}
    align-self: flex-end;
    width: 20px;
    height: 20px;
    margin: 0 6px 0 auto;
`

const Workspace = styled.main`
    display: flex;
    flex: 1;
`

const Sidebar = styled.aside`
    position: relative;
    width: 226px;
    flex: none;
    border-right: 2px solid #b0afb3;
`

const HideButton = styled.button`
    ${plainButton}
    width: 12px;
    height: 18px;
    margin-left: auto;
    margin-right: 3px;
`

const Section = styled.section`
    margin-top: ${({ $first }) => $first ? 0 : 9}px;
`

const SectionHead = styled.div`
    display: flex;
    align-items: center;
    height: 22px;
    padding-left: 12px;
    gap: 5px;
`

const SectionLink = styled.a`
    display: flex;
    align-items: center;
    gap: 5px;
    height: 20px;
    padding-right: 6px;
    border: 1px solid ${({ $boxed }) => $boxed ? '#b5b5b5' : 'transparent'};
    color: #111;
    font-weight: 700;
    text-decoration: none;
`

const Item = styled.div`
    display: flex;
    align-items: center;
    gap: 1px;
    height: ${({ $compact }) => $compact ? 21 : 23}px;
    padding-left: ${({ $expandable }) => $expandable ? 34 : 43}px;
`

const ItemLink = styled.a`
    display: flex;
    align-items: center;
    gap: 5px;
    height: 20px;
    padding: 0 3px 0 1px;
    border: 1px solid ${({ $selected }) => $selected ? '#7aa7e0' : 'transparent'};
    background: ${({ $selected }) => $selected ? '#cfe3fb' : 'none'};
    color: #333;
    text-decoration: none;
    white-space: nowrap;
`

const Divider = styled.hr`
    width: 159px;
    height: 1px;
    margin: 6px 0 15px 35px;
    border: 0;
    background: #aaa;
`

const Tooltip = styled.div`
    position: absolute;
    left: 0;
    bottom: 133px;
    width: 222px;
    height: 19px;
    padding-left: 2px;
    border: 1px solid #bbb;
    background: #fff;
    color: #6b6b6b;
    font-family: ${narrow};
    line-height: 17px;
    white-space: nowrap;
`

const ListPane = styled.section`
    display: flex;
    flex-direction: column;
    flex: none;
    width: 65px;
    padding: 0 4px 1px 2px;
    border-right: 2px solid #a3a2a6;
`

const ListTop = styled.div`
    height: 64px;
    padding-top: 3px;
    background: #f0eff0;
`

const SearchBox = styled.div`
    position: relative;
    width: 54px;
    height: 25px;

    input {
        width: 100%;
        height: 100%;
        padding: 0 20px 4px 4px;
        border: 1px solid #888;
        background: #fff;
        color: #aaa;
    }

    svg {
        position: absolute;
        right: 5px;
        top: 10px;
    }
`

const ListTitle = styled.h2`
    margin: 0;
    padding-left: 1px;
    font-size: 16px;
    font-weight: 700;
    line-height: 34px;
`

const FileTable = styled.table`
    table-layout: fixed;
    width: 100%;
    border-collapse: collapse;

    th, td {
        height: 24px;
        padding: 0 0 2px 6px;
        overflow: hidden;
        border-bottom: 1px solid #e8e8e8;
        text-align: left;
        font-weight: 400;
        white-space: nowrap;
    }

    th {
        padding: 0 0 0 4px;
        border-bottom: 0;
        background: #b9d8f1;
    }

    th:first-child, td:first-child {
        width: 19px;
        padding-left: 2px;
        background-color: #f6f6f6;
    }

    th:first-child {
        background-color: #b9d8f1;
    }
`

const ScrollBar = styled.div`
    display: flex;
    height: 18px;
    margin-top: auto;
    background: #ececec;
`

const ScrollArrow = styled.button`
    ${plainButton}
    width: 18px;
    border: 1px solid #b5b5b5;
    background: #fff;

    &:last-child {
        margin-left: auto;
    }
`

const ScrollThumb = styled.div`
    width: 8px;
    border: 1px solid #b5b5b5;
    background: #fff;
`

const Detail = styled.section`
    display: flex;
    flex: 1;
    flex-direction: column;
    min-width: 0;
    padding: 7px 0 0 2px;
`

const DocTabs = styled.div`
    display: flex;
    align-items: flex-end;
    height: 24px;
    border-bottom: 1px solid #ddd;
`

const DocTab = styled.div`
    display: flex;
    align-items: center;
    width: ${({ $active }) => $active ? 212 : 206}px;
    height: ${({ $active }) => $active ? 24 : 21}px;
    padding: 0 4px 0 2px;
    border: solid #ddd;
    border-width: 1px 1px 0;
    background: ${({ $active }) => $active ? '#fefefe' : '#f0eff0'};
    font-family: ${narrow};
    white-space: nowrap;
`

const CloseTab = styled.button`
    ${plainButton}
    align-self: flex-end;
    width: 17px;
    height: 16px;
    margin: 0 0 3px auto;
    background: #c0c0c2;
`

const DetailBody = styled.div`
    display: flex;
    flex: 1;
    padding: 2px 0 4px;
    background: #efeef0;
`

const ChartFrame = styled.div`
    flex: 1;
    border: solid #3f3e44;
    border-width: 2px 1px 1px;
    border-top-color: #66646a;
    padding: 0 1px 1px;
    background: #fefefe;
`

const SideTabs = styled.div`
    width: 23px;
    margin: 0 0 -4px 2px;
    background: #a2a0a3;
`

const SideTab = styled.button`
    ${plainButton}
    writing-mode: vertical-rl;
    width: ${({ $active }) => $active ? 23 : 21}px;
    height: ${({ $active }) => $active ? 44 : 76}px;
    background: ${({ $active }) => $active ? '#fff' : '#ececec'};
    color: #222;
    font-weight: ${({ $active }) => $active ? 700 : 400};
    white-space: nowrap;

    span {
        padding: ${({ $active }) => $active ? '3px 1px' : '0'};
        border: ${({ $active }) => $active ? '1px dotted #555' : '0'};
    }
`

const StatusBar = styled.footer`
    display: flex;
    align-items: center;
    height: 32px;
    padding: 4px 18px 0 1px;
    background: #4c3296;
    color: #e6dff5;
    font-family: ${narrow};
`

const StatusText = styled.span`
    width: ${({ $width }) => $width ? `${$width}px` : 'auto'};
    padding-left: 2px;
    white-space: nowrap;
`

const ZoomTools = styled.div`
    display: flex;
    align-items: center;
    margin-left: auto;
    padding-bottom: 7px;
`

const ZoomValue = styled.span`
    width: 60px;
    text-align: right;
`
